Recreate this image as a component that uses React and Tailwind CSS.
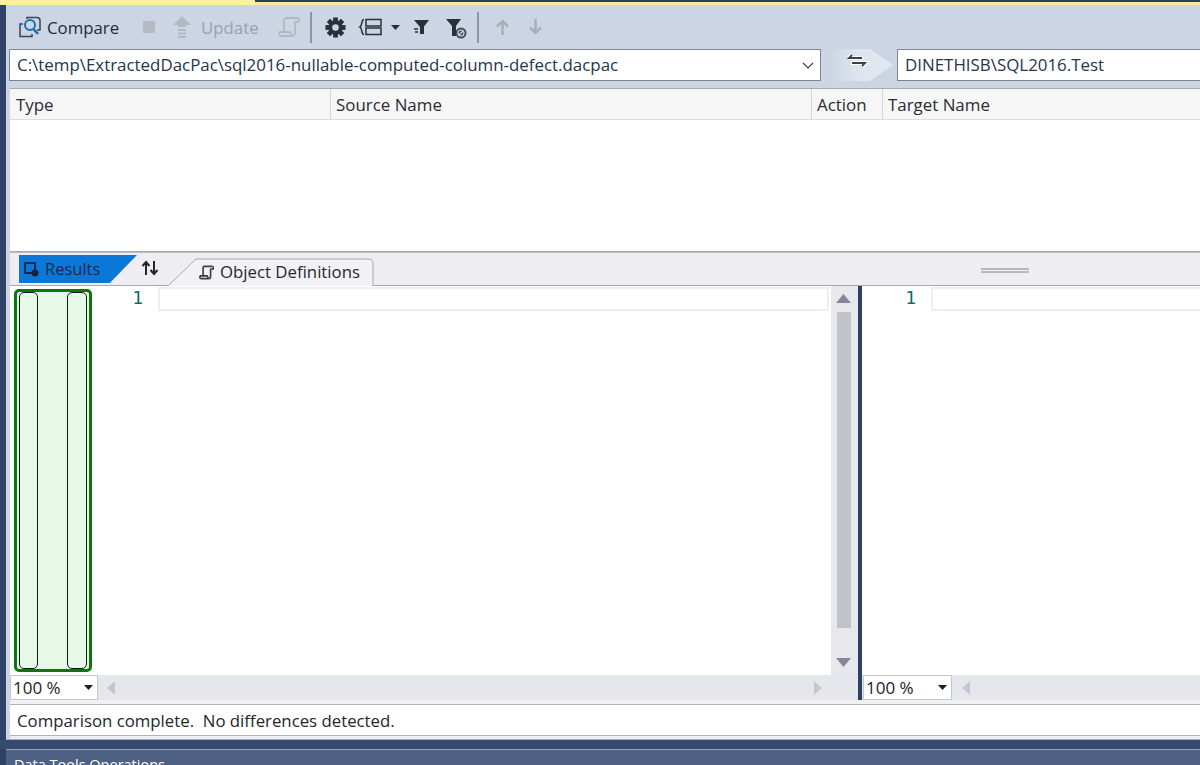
const font = { fontFamily: '"Open Sans", "Noto Sans", sans-serif' };

function CompareIcon() {
  return (
    <svg width="22" height="22" viewBox="0 0 22 22" fill="none">
      <path d="M8 3V1.500h10c2 0 3 1 3 3V14h-3" stroke="#3b4351" strokeWidth="1.500" />
      <path d="M4 8H1v12.500h12V18" stroke="#3b4351" strokeWidth="1.500" />
      <circle cx="11" cy="9" r="5" stroke="#1b6fb5" strokeWidth="2" />
      <path d="M14.500 13l4.500 5" stroke="#1b6fb5" strokeWidth="2.600" />
    </svg>
  );
}
function UpdateIcon() {
  return (
    <svg width="18" height="22" viewBox="0 0 18 22" fill="#b4b8c2">
      <path d="M9 0l9 9h-5v2H5V9H0z" />
      <rect x="5" y="13" width="8" height="2" />
      <rect x="5" y="16.500" width="8" height="2" />
      <rect x="5" y="20" width="8" height="2" />
    </svg>
  );
}
function ScriptIcon({ color = "#b4b8c2", size = 22, w = 1.8 }) {
  return (
    <svg width={size} height={size} viewBox="0 0 22 22" fill="none" stroke={color} strokeWidth={w}>
      <path d="M20 2H8C6 2 6 4 6 5v12" />
      <path d="M20 2c1.500 1 1 4 0 4h-2" />
      <path d="M17 5v11c0 2-1 4-3 4H3c-2 0-2-3-1-4h10c1 0 1 2 1 4" />
    </svg>
  );
}
function GearIcon() {
  return (
    <svg width="21" height="21" viewBox="0 0 22 22">
      <g fill="#2b2f38">
        <circle cx="11" cy="11" r="7.500" />
        {[0, 45, 90, 135, 180, 225, 270, 315].map((a) => (
          <rect key={a} x="8.500" y="0.500" width="5" height="5" transform={`rotate(${a} 11 11)`} />
        ))}
      </g>
      <circle cx="11" cy="11" r="3.400" fill="#ccd5e4" />
    </svg>
  );
}
function GroupIcon() {
  return (
    <svg width="24" height="18" viewBox="0 0 24 18" fill="none" stroke="#2b2f38" strokeWidth="1.500">
      <path d="M6 1.500C3 1.500 4.500 8 2 9c2.500 1 1 7.500 4 7.500" />
      <rect x="8" y="1.500" width="15" height="6.500" />
      <rect x="8" y="10" width="15" height="6.500" />
    </svg>
  );
}
function FilterOne() {
  return (
    <svg width="15" height="15" viewBox="0 0 15 15">
      <path d="M0 0h15L10 6.500V14H6V7z" fill="#2b2f38" />
      <path d="M0 9h4M1 12h3" stroke="#2b2f38" strokeWidth="1.500" />
    </svg>
  );
}
function FilterTwo() {
  return (
    <svg width="21" height="20" viewBox="0 0 21 20">
      <path d="M0 0h15L10 7v10H6V7z" fill="#2b2f38" />
      <circle cx="15" cy="14" r="5.500" fill="#454b57" />
      <circle cx="15" cy="14" r="3" fill="none" stroke="#ccd5e4" strokeWidth="1.200" />
      <path d="M13 16l4-4" stroke="#ccd5e4" strokeWidth="1.200" />
    </svg>
  );
}
function Arrow({ down }) {
  return (
    <svg width="13" height="16" viewBox="0 0 13 16" fill="none" stroke="#a9aeb9" strokeWidth="2.600" className={down ? "rotate-180" : ""}>
      <path d="M6.500 16V2M1 7.500L6.500 2 12 7.500" />
    </svg>
  );
}
function Tri({ dir, color = "#c4c6cf" }) {
  const points = {
    left: "8,0 8,14 0,7",
    right: "0,0 0,14 8,7",
  };
  return (
    <svg width="8" height="14" viewBox="0 0 8 14" className="shrink-0">
      <polygon points={points[dir]} fill={color} />
    </svg>
  );
}
function ZoomCombo({ w }) {
  return (
    <div className={`${w} h-[25px] shrink-0 bg-white border border-[#c6c8d0] flex items-center justify-between pl-[2px] pr-[4px] text-[#1b1b1f] text-[17px]`}>
      <span className="pt-[1px]">100 %</span>
      <svg width="9" height="5" viewBox="0 0 9 5"><polygon points="0,0 9,0 4.500,5" fill="#1c1f28" /></svg>
    </div>
  );
}
function LineBox({ num, numW, boxClass }) {
  return (
    <div className="flex flex-1 min-w-0 h-[24px] mt-[1px]">
      <div className={`${numW} shrink-0 text-right text-[#0b6e66] text-[18px] leading-[22px]`} style={{ fontFamily: '"DejaVu Sans Mono", monospace' }}>{num}</div>
      <div className={`flex-1 ml-[15px] border-2 border-[#eeeef2] bg-white ${boxClass}`} />
    </div>
  );
}

export default function App() {
  return (
    <div className="w-[1200px] h-[765px] overflow-hidden bg-[#2f4265] flex flex-col" style={font}>
      <div className="h-[5px] shrink-0 flex">
        <div className="w-[255px] bg-[#fff29d]" />
        <div className="flex-1 flex flex-col">
          <div className="h-[2px] bg-[#2d3c5e]" />
          <div className="h-[3px] bg-[#f4ea9f]" />
        </div>
      </div>
      <div className="h-[734px] shrink-0 ml-[6px] bg-[#ccd5e4] flex flex-col">
        <div className="h-[44px] shrink-0 flex items-center">
          <div className="ml-[13px]"><CompareIcon /></div>
          <span className="ml-[6px] mt-[1px] text-[16.800px] text-[#232a38]">Compare</span>
          <div className="ml-[24px] w-[12px] h-[12px] bg-[#b6bac5]" />
          <div className="ml-[18px]"><UpdateIcon /></div>
          <span className="ml-[10px] mt-[1px] text-[16.800px] text-[#9aa0ad]">Update</span>
          <div className="ml-[19px]"><ScriptIcon /></div>
          <div className="ml-[10px] w-[2px] h-[31px] bg-[#8d96a6]" />
          <div className="ml-[13px]"><GearIcon /></div>
          <div className="ml-[12px]"><GroupIcon /></div>
          <svg className="ml-[9px]" width="9" height="5" viewBox="0 0 9 5"><polygon points="0,0 9,0 4.500,5" fill="#2b2f38" /></svg>
          <div className="ml-[14px]"><FilterOne /></div>
          <div className="ml-[17px] mt-[4px]"><FilterTwo /></div>
          <div className="ml-[10px] w-[2px] h-[31px] bg-[#8d96a6]" />
          <div className="ml-[17px]"><Arrow /></div>
          <div className="ml-[20px]"><Arrow down /></div>
        </div>
        <div className="h-[32px] shrink-0 flex ml-[3px]">
          <div className="w-[812px] shrink-0 bg-white border border-[#7d8696] flex items-center justify-between pl-[7px] pr-[6px] text-[16.900px] text-[#26344f]">
            <span className="whitespace-nowrap">C:\temp\ExtractedDacPac\sql2016-nullable-computed-column-defect.dacpac</span>
            <svg width="12" height="7" viewBox="0 0 12 7" fill="none" stroke="#3b4351" strokeWidth="1.200"><path d="M1 1l5 5 5-5" /></svg>
          </div>
          <svg width="76" height="32" viewBox="0 0 76 32" className="shrink-0">
            <defs>
              <linearGradient id="swapFill" x1="0" x2="1" y1="0" y2="0">
                <stop offset="0" stopColor="#ccd5e4" />
                <stop offset="0.450" stopColor="#dfe5ef" />
                <stop offset="1" stopColor="#e2e8f1" />
              </linearGradient>
            </defs>
            <polygon points="9,0 49,0 72,16 49,32 9,32" fill="url(#swapFill)" />
            <path d="M28 9h8M28 9l3-3M28 9h14M30 14h14l-3 3" fill="none" stroke="#fff" strokeWidth="4" />
            <path d="M36 9h-8l3-3M28 9h13M31 14h13l-3 3" fill="none" stroke="#3a3f49" strokeWidth="1.800" />
          </svg>
          <div className="flex-1 bg-white border border-[#7d8696] border-r-0 flex items-center pl-[7px] text-[16.900px] text-[#26344f] whitespace-nowrap">DINETHISB\SQL2016.Test</div>
        </div>
        <div className="flex-1 min-h-0 ml-[4px] mt-[7px] flex flex-col">
          <div className="h-[32px] shrink-0 bg-[#f6f6f6] border-t border-t-[#a9a9a9] border-b border-b-[#dcdce2] flex text-[16.900px] text-[#2a2c33]">
            <div className="w-[321px] pl-[6px] pt-[1px] border-r border-[#d4d6dd] flex items-center">Type</div>
            <div className="w-[481px] pl-[5px] pt-[1px] border-r border-[#d4d6dd] flex items-center">Source Name</div>
            <div className="w-[71px] pl-[5px] pt-[1px] border-r border-[#d4d6dd] flex items-center">Action</div>
            <div className="flex-1 pl-[5px] pt-[1px] flex items-center">Target Name</div>
          </div>
          <div className="h-[132px] shrink-0 bg-white border-b border-[#a9a9a9]" />
          <div className="h-[34px] shrink-0 bg-[#eeeef2] border-t border-t-[#bdbdc2] border-b border-b-[#a9a9ad] flex">
            <div className="ml-[9px] mt-[2px] w-[118px] h-[28px] shrink-0 bg-[#0b78d8] [clip-path:polygon(0_0,100%_0,77%_100%,0_100%)] flex items-center pl-[5px] text-[16.500px] text-[#172a4d]">
              <svg width="15" height="15" viewBox="0 0 15 15" fill="none"><rect x="1" y="1" width="10" height="10" stroke="#16233f" strokeWidth="1.800" /><circle cx="11" cy="11" r="3.500" fill="#16233f" /></svg>
              <span className="ml-[6px]">Results</span>
            </div>
            <svg width="18" height="16" viewBox="0 0 18 16" className="shrink-0 ml-[4px] mt-[7px]" fill="none" stroke="#23262d" strokeWidth="2">
              <path d="M5 15V3M1.500 6L5 2l3.500 4M13 1v12M9.500 10l3.500 4 3.500-4" />
            </svg>
            <div className="relative ml-[9px] w-[206px] h-[28px] mt-[5px] shrink-0">
              <svg width="206" height="28" viewBox="0 0 206 28" className="absolute inset-0">
                <path d="M0 28L28 1h172q5 0 5 5v22" fill="#f2f2f5" stroke="#a9a9ad" />
              </svg>
              <div className="relative flex items-center h-full pl-[31px] text-[16.800px] text-[#25272e]">
                <ScriptIcon color="#3a3d45" size={15} w={2.400} />
                <span className="ml-[6px]">Object Definitions</span>
              </div>
            </div>
            <div className="ml-[607px] mt-[15px] w-[48px] h-[5px] shrink-0 border-y-2 border-[#b9b9bd]" />
          </div>
          <div className="flex-1 min-h-0 flex bg-white">
            <div className="w-[848px] shrink-0 flex flex-col">
              <div className="flex-1 min-h-0 flex">
                <div className="w-[78px] h-[383px] mt-[3px] ml-[4px] shrink-0 bg-[#e6f9e6] border-[3px] border-[#08780f] rounded-[5px] flex justify-between pl-[2px] pr-[2px]">
                  <div className="w-[19px] h-full border border-[#111a11] rounded-[5px]" />
                  <div className="w-[20px] h-full border border-[#111a11] rounded-[5px]" />
                </div>
                <LineBox num="1" numW="w-[51px]" boxClass="" />
                <div className="w-[27px] ml-[2px] pr-[2px] shrink-0 bg-[#e8e8ec] flex flex-col items-center">
                  <svg className="mt-[8px] shrink-0" width="15" height="9" viewBox="0 0 15 9"><polygon points="7.500,0 15,9 0,9" fill="#86869a" /></svg>
                  <div className="w-[14px] h-[316px] mt-[9px] shrink-0 bg-[#c2c3c9]" />
                  <svg className="mt-[30px] shrink-0" width="15" height="9" viewBox="0 0 15 9"><polygon points="0,0 15,0 7.500,9" fill="#86869a" /></svg>
                </div>
              </div>
              <div className="h-[25px] shrink-0 bg-[#e6e7ec] flex items-center">
                <ZoomCombo w="w-[88px]" />
                <div className="ml-[9px]"><Tri dir="left" /></div>
                <div className="ml-[699px]"><Tri dir="right" /></div>
                <div className="flex-1" />
              </div>
            </div>
            <div className="w-[4px] shrink-0 bg-[#2d3f63]" />
            <div className="flex-1 min-w-0 flex flex-col">
              <div className="flex-1 min-h-0 flex">
                <LineBox num="1" numW="w-[54px]" boxClass="border-r-0" />
              </div>
              <div className="h-[25px] shrink-0 bg-[#e6e7ec] flex items-center pl-[1px]">
                <ZoomCombo w="w-[89px]" />
                <div className="ml-[10px]"><Tri dir="left" /></div>
              </div>
            </div>
          </div>
          <div className="h-[4px] shrink-0 bg-[#f1f1f4]" />
          <div className="h-[32px] shrink-0 bg-white border-y border-[#b3b3b6] pl-[7px] pt-[2px] flex items-center text-[16.800px] text-[#23262d] whitespace-pre">Comparison complete.  No differences detected.</div>
          <div className="h-[3px] shrink-0 bg-[#eeeef2]" />
        </div>
      </div>
      <div className="h-[1px] shrink-0 ml-[6px] bg-[#a3aed0]" />
      <div className="h-[9px] shrink-0 bg-[#374a6c]" />
      <div className="flex-1 min-h-0 ml-[6px] bg-[#4e6183] border-t border-[#93a3c6] pl-[8px] pt-[5px] text-[14.500px] leading-[20px] text-white whitespace-nowrap">Data Tools Operations</div>
    </div>
  );
}
